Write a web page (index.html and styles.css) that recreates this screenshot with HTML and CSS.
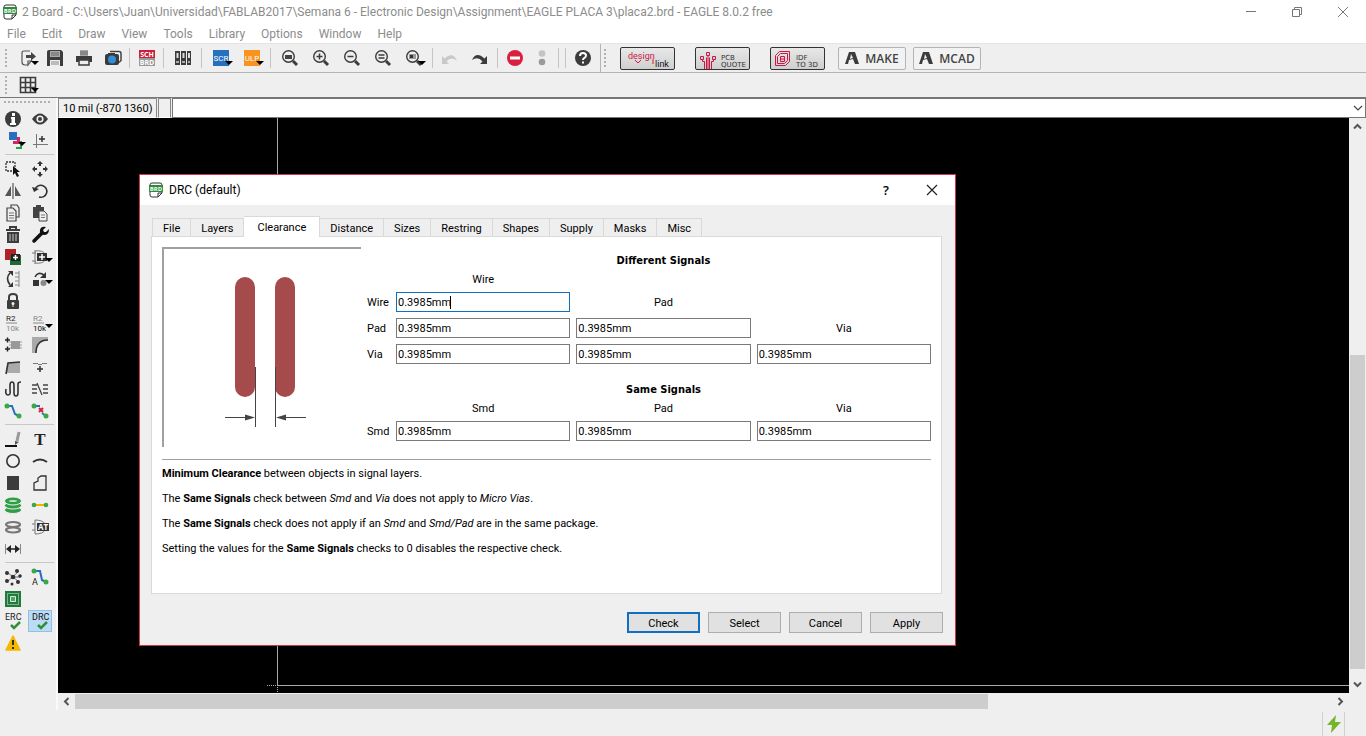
FILE: index.html
```html
<!DOCTYPE html>
<html lang="en">
<head>
    <meta charset="UTF-8">
    <meta name="viewport" content="width=device-width, initial-scale=1.0">
    <title>2 Board - EAGLE 8.0.2 free</title>
    <link rel="stylesheet" href="styles.css">
</head>
<body>
    <header class="titlebar">
        <svg class="app-icon" width="14" height="16" viewBox="0 0 14 16"><path d="M3 1h8q2 0 2 2v8l-4 4H3q-2 0-2-2V3q0-2 2-2z" fill="#fff" stroke="#333"/><path d="M9 15v-4h4" fill="none" stroke="#333"/><path d="M0 3h14v7H0z" fill="#2e8b3d"/><text x="7" y="9" class="icon-text" font-size="6" fill="#fff">BRD</text></svg>
        <h1>2 Board - C:\Users\Juan\Universidad\FABLAB2017\Semana 6 - Electronic Design\Assignment\EAGLE PLACA 3\placa2.brd - EAGLE 8.0.2 free</h1>
        <div class="window-buttons">
            <button aria-label="Minimize"><svg width="12" height="12" viewBox="0 0 12 12"><path d="M1 5.500h10" stroke="#777"/></svg></button>
            <button aria-label="Restore"><svg width="12" height="12" viewBox="0 0 12 12"><path d="M1.500 3.500h7v7h-7zM3.500 3.500v-2h7v7h-2" fill="none" stroke="#777"/></svg></button>
            <button aria-label="Close"><svg width="12" height="12" viewBox="0 0 12 12"><path d="M1 1l10 10M11 1L1 11" stroke="#777"/></svg></button>
        </div>
    </header>
    <nav class="menubar">
        <a href="#">File</a>
        <a href="#">Edit</a>
        <a href="#">Draw</a>
        <a href="#">View</a>
        <a href="#">Tools</a>
        <a href="#">Library</a>
        <a href="#">Options</a>
        <a href="#">Window</a>
        <a href="#">Help</a>
    </nav>

    <div class="toolbar">
        <span class="handle"></span>
        <button class="tool narrow drop" aria-label="Open"><svg width="18" height="18" viewBox="0 0 18 18"><path d="M11 2H5Q3 2 3 4v9q0 3 3 3h3M13 11l-4 5v-4h4" fill="none" stroke="#555" stroke-width="1.200"/><path d="M7 6h5V3l5 4.500-5 4V9H7z" fill="#444"/></svg></button>
        <button class="tool narrow" aria-label="Save"><svg width="18" height="18" viewBox="0 0 18 18"><path d="M1 3q0-2 2-2h12l2 2v14H1z" fill="#3c3c3c"/><path d="M4 2h10v6H4z" fill="#aaa"/><path d="M4 11h10v6H4z" fill="#efefef"/><path d="M5 4h8M5 6h8" stroke="#666"/><path d="M5 13h8M5 15h8" stroke="#888"/></svg></button>
        <button class="tool" aria-label="Print"><svg width="18" height="18" viewBox="0 0 18 18"><path d="M5 1h8v6H5z" fill="#aaa"/><path d="M5 3h8M5 5h8" stroke="#666"/><path d="M1 7h16v6H1z" fill="#3c3c3c"/><path d="M4 11h10v5H4z" fill="#eee" stroke="#3c3c3c" stroke-width="1.500"/></svg></button>
        <button class="tool narrow" aria-label="CAM"><svg width="18" height="18" viewBox="0 0 18 18"><path d="M6 2.500h9q2 0 2 2v7l-2 2" fill="none" stroke="#444" stroke-width="1.500"/><rect x="1" y="5" width="14" height="11" rx="2" fill="#3a3a3a"/><path d="M4 4h7v2H4z" fill="#3a3a3a"/><circle cx="8" cy="10.500" r="4" fill="#2d8fdc"/></svg></button>
        <span class="sep"></span>
        <button class="tool narrow" aria-label="Switch to schematic"><svg width="18" height="18" viewBox="0 0 18 18"><path d="M1 1h16v8H1z" fill="#c9203a"/><path d="M1 9h16v8H1z" fill="#999"/><text x="9" y="8" class="icon-text" font-size="7" fill="#fff">SCH</text><text x="9" y="16" class="icon-text" font-size="7" fill="#fff">BRD</text></svg></button>
        <span class="sep"></span>
        <button class="tool" aria-label="Library manager"><svg width="18" height="18" viewBox="0 0 18 18"><path d="M1 2h5v14H1zM7 2h5v14H7zM13 2h4v14h-4z" fill="#3c3c3c"/><path d="M2.500 4h2v5h-2zM8.500 4h2v5h-2zM14 4h2v5h-2z" fill="#ddd"/><path d="M2 13h3M8 13h3M14 13h2" stroke="#aaa" stroke-width="2"/></svg></button>
        <span class="sep"></span>
        <button class="tool drop" aria-label="Run script"><svg width="18" height="18" viewBox="0 0 18 18"><path d="M1 1h16v16H1z" fill="#2670bd"/><text x="9" y="12" class="icon-text thin" font-size="8" fill="#fff">SCR</text></svg></button>
        <button class="tool drop" aria-label="Run ULP"><svg width="18" height="18" viewBox="0 0 18 18"><path d="M1 1h16v16H1z" fill="#f7931e"/><text x="9" y="12" class="icon-text thin" font-size="8" fill="#fff">ULP</text></svg></button>
        <span class="sep"></span>
        <button class="tool" aria-label="Zoom to fit"><svg width="18" height="18" viewBox="0 0 18 18"><circle cx="7.500" cy="7.500" r="5.800" fill="#eee" stroke="#3c3c3c" stroke-width="1.400"/><path d="M12 12l4 4" stroke="#3c3c3c" stroke-width="3"/><path d="M4 6h7v4H4z" fill="#444"/></svg></button>
        <button class="tool" aria-label="Zoom in"><svg width="18" height="18" viewBox="0 0 18 18"><circle cx="7.500" cy="7.500" r="5.800" fill="#eee" stroke="#3c3c3c" stroke-width="1.400"/><path d="M12 12l4 4" stroke="#3c3c3c" stroke-width="3"/><path d="M4.500 7.500h6M7.500 4.500v6" stroke="#3c3c3c" stroke-width="1.500"/></svg></button>
        <button class="tool" aria-label="Zoom out"><svg width="18" height="18" viewBox="0 0 18 18"><circle cx="7.500" cy="7.500" r="5.800" fill="#eee" stroke="#3c3c3c" stroke-width="1.400"/><path d="M12 12l4 4" stroke="#3c3c3c" stroke-width="3"/><path d="M4.500 7.500h6" stroke="#3c3c3c" stroke-width="1.500"/></svg></button>
        <button class="tool" aria-label="Redraw"><svg width="18" height="18" viewBox="0 0 18 18"><circle cx="7.500" cy="7.500" r="5.800" fill="#eee" stroke="#3c3c3c" stroke-width="1.400"/><path d="M12 12l4 4" stroke="#3c3c3c" stroke-width="3"/><path d="M4.500 6h6M4.500 9h6" stroke="#3c3c3c" stroke-width="1.300"/></svg></button>
        <button class="tool drop" aria-label="Zoom select"><svg width="18" height="18" viewBox="0 0 18 18"><circle cx="7.500" cy="7.500" r="5.800" fill="#eee" stroke="#3c3c3c" stroke-width="1.400"/><path d="M12 12l4 4" stroke="#3c3c3c" stroke-width="3"/><path d="M4 5h7v5H4z" fill="#999"/><path d="M5 6h3v3H5z" fill="#333"/></svg></button>
        <span class="sep"></span>
        <button class="tool narrow" aria-label="Undo"><svg width="18" height="18" viewBox="0 0 18 18"><path d="M1 7v8h7l-2.500-2.500Q10 7 16 12 12 2 3.500 9.500z" fill="#c8c8c8"/></svg></button>
        <button class="tool" aria-label="Redo"><svg width="18" height="18" viewBox="0 0 18 18"><path d="M17 7v8h-7l2.500-2.500Q8 7 2 11 6 2 14.500 9.500z" fill="#3c3c3c"/></svg></button>
        <span class="sep"></span>
        <button class="tool narrow" aria-label="Stop"><svg width="18" height="18" viewBox="0 0 18 18"><circle cx="9" cy="9" r="8" fill="#d9203c"/><path d="M4 9h10" stroke="#fff" stroke-width="3"/></svg></button>
        <button class="tool narrow" aria-label="Go"><svg width="18" height="18" viewBox="0 0 18 18"><circle cx="9" cy="4.500" r="3.300" fill="#c4c4c4"/><circle cx="9" cy="13" r="3.300" fill="#9a9a9a"/></svg></button>
        <span class="sep"></span>
        <span class="sep"></span>
        <button class="tool narrow" aria-label="Help"><svg width="18" height="18" viewBox="0 0 18 18"><circle cx="9" cy="9" r="8" fill="#3c3c3c"/><path d="M6 7q0-3 3-3t3 2.500q0 1.500-1.500 2.300Q9 9.500 9 11" fill="none" stroke="#fff" stroke-width="2"/><path d="M8 12.500h2v2H8z" fill="#fff"/></svg></button>
        <span class="edge"></span>
        <span class="handle"></span>
        <div class="links">
            <button class="link-button" aria-label="design link"><svg width="54" height="22" viewBox="0 0 54 22"><text x="7" y="11" class="icon-text start thin" font-size="9" fill="#cc1744">design</text><path d="M14 12l3 3 3-3M32 11v5" fill="none" stroke="#cc1744"/><text x="34" y="19" class="icon-text start thin" font-size="9" fill="#111">link</text></svg></button>
            <button class="link-button" aria-label="PCB quote"><svg width="54" height="22" viewBox="0 0 54 22"><g fill="none" stroke="#cc1744"><path d="M4.500 8.500h3v3h-3zM10.500 4.500h3v3h-3zM16.500 8.500h3v3h-3z"/><path d="M6.500 11.500v2h2V22M12 7.500V22M17.500 11.500v2h-2V22M10.500 9.500V22M13.500 9.500V22"/></g><text x="25" y="12" class="icon-text start wide" font-size="7" fill="#333">PCB</text><text x="25" y="19" class="icon-text start wide" font-size="7" fill="#333">QUOTE</text></svg></button>
            <button class="link-button" aria-label="IDF to 3D"><svg width="54" height="22" viewBox="0 0 54 22"><g fill="none" stroke="#cc1744"><path d="M4.500 7.500l4-4h10v10l-4 4h-10z"/><path d="M6.500 8.500l3-3h7v7l-3 3h-7z"/><path d="M9.500 8.500h4v5h-4zM9.500 11h4"/></g><text x="25" y="12" class="icon-text start wide" font-size="7" fill="#333">IDF</text><text x="25" y="19" class="icon-text start wide" font-size="7" fill="#333">TO 3D</text></svg></button>
        </div>
        <div class="links plain">
            <button class="brand-button"><svg width="14" height="14" viewBox="0 0 14 14"><path d="M0 13L4 1h6l4 12h-4L8 8l-4 1-1 4z" fill="#3c3c3c"/><path d="M6 3l2 4-3 1z" fill="#f2f2f2"/></svg>MAKE</button>
            <button class="brand-button"><svg width="14" height="14" viewBox="0 0 14 14"><path d="M0 13L4 1h6l4 12h-4L8 8l-4 1-1 4z" fill="#3c3c3c"/><path d="M6 3l2 4-3 1z" fill="#f2f2f2"/></svg>MCAD</button>
        </div>
    </div>
    <div class="toolbar second">
        <span class="handle"></span>
        <button class="tool narrow drop" aria-label="Grid"><svg width="18" height="18" viewBox="0 0 18 18"><path d="M1.500 1.500h15v15h-15zM1.500 6.500h15M1.500 11.500h15M6.500 1.500v15M11.500 1.500v15" fill="none" stroke="#3c3c3c" stroke-width="1.600"/></svg></button>
    </div>

    <div class="workspace">
        <aside class="sidebar">
            <div class="grip"></div>
            <div class="tools">
                <button class="side" aria-label="Info"><svg width="18" height="18" viewBox="0 0 18 18"><circle cx="9" cy="9" r="8" fill="#3c3c3c"/><path d="M8 3h3v3H8zM7 7h4v6h1v2H6v-2h1.500V9H7z" fill="#fff"/></svg></button>
                <button class="side" aria-label="Show"><svg width="18" height="18" viewBox="0 0 18 18"><path d="M1 9q8-11 16 0-8 11-16 0z" fill="#3c3c3c"/><circle cx="9" cy="9" r="3.600" fill="#eee"/><circle cx="9" cy="9" r="2" fill="#3c3c3c"/></svg></button>
                <button class="side drop" aria-label="Layers"><svg width="18" height="18" viewBox="0 0 18 18"><path d="M5 0h8v8H5z" fill="#2670bd"/><path d="M13 5h3v7H9V9h4z" fill="#d6246a"/><path d="M16 9h2v8h-6v-2h4z" fill="#2a9d4a"/></svg></button>
                <button class="side" aria-label="Mark"><svg width="18" height="18" viewBox="0 0 18 18"><path d="M5.500 2v14M2 12.500h15" stroke="#777"/><path d="M8 7h6M11 4v6" stroke="#333" stroke-width="1.500"/></svg></button>
            </div>
            <hr>
            <div class="tools">
                <button class="side" aria-label="Group"><svg width="18" height="18" viewBox="0 0 18 18"><path d="M2 2h9v9H2z" fill="none" stroke="#333" stroke-width="1.300" stroke-dasharray="2 1"/><path d="M9 6v9l2-2 2 4 2-1-2-4h3z" fill="#111"/></svg></button>
                <button class="side" aria-label="Move"><svg width="18" height="18" viewBox="0 0 18 18"><path d="M9 1l3 3H6zM9 17l-3-3h6zM1 9l3-3v6zM17 9l-3 3V6z" fill="#333"/><path d="M9 3v3M9 12v3M3 9h3M12 9h3" stroke="#333" stroke-width="2"/></svg></button>
                <button class="side" aria-label="Mirror"><svg width="18" height="18" viewBox="0 0 18 18"><path d="M7 4v10H1zM11 4v10h6z" fill="#555"/><path d="M9 1v16" stroke="#555" stroke-width="1.200"/></svg></button>
                <button class="side" aria-label="Rotate"><svg width="18" height="18" viewBox="0 0 18 18"><path d="M4 8a6 6 0 1 1 4 7" fill="none" stroke="#333" stroke-width="1.600"/><path d="M1 5l2 5 5-3z" fill="#333"/></svg></button>
                <button class="side" aria-label="Copy"><svg width="18" height="18" viewBox="0 0 18 18"><g fill="#eee" stroke="#444" stroke-width="1.200"><path d="M7 1h6l2 3v9H7z"/><path d="M3 4h6l3 3v10H3z"/></g><path d="M5 9h5M5 11.500h5M5 14h5" stroke="#777"/></svg></button>
                <button class="side" aria-label="Paste"><svg width="18" height="18" viewBox="0 0 18 18"><path d="M2 3h11v11H2z" fill="#444"/><path d="M5 1h5v3H5z" fill="#444"/><path d="M8 7h5l3 3v7H8z" fill="#eee" stroke="#444"/><path d="M10 11h4M10 13.500h4" stroke="#777"/></svg></button>
                <button class="side" aria-label="Delete"><svg width="18" height="18" viewBox="0 0 18 18"><path d="M2 4h14M6 3V1h6v2" fill="none" stroke="#3c3c3c" stroke-width="2"/><path d="M3 6h12v11H3z" fill="#3c3c3c"/><path d="M6 8v7M9 8v7M12 8v7" stroke="#ccc"/></svg></button>
                <button class="side" aria-label="Change"><svg width="18" height="18" viewBox="0 0 18 18"><path d="M3 15l8-8" stroke="#111" stroke-width="3.500" stroke-linecap="round"/><path d="M15 1l-3 3 1 2 2 0 3-3q0 6-5 6-5-1-4-5 1-4 6-3z" fill="#111"/></svg></button>
                <button class="side" aria-label="Add"><svg width="18" height="18" viewBox="0 0 18 18"><path d="M1 1h11v11H1z" fill="#b3202a"/><path d="M6 7h11v10H6z" fill="#1f6b35"/><path d="M7 6h9v7H7z" fill="#222"/><path d="M11.500 7v5M9 9.500h5" stroke="#fff" stroke-width="1.500"/></svg></button>
                <button class="side drop" aria-label="Add part"><svg width="18" height="18" viewBox="0 0 18 18"><path d="M4 2v14M1 5h4M1 13h4M4 3q8-1 10 3M4 15q8 1 10-3" fill="none" stroke="#777"/><path d="M6 5h10v8H6z" fill="#333"/><path d="M11 6v6M8 9h6" stroke="#fff" stroke-width="1.500"/></svg></button>
                <button class="side" aria-label="Pinswap"><svg width="18" height="18" viewBox="0 0 18 18"><path d="M6 3Q1 8 6 15" fill="none" stroke="#333" stroke-width="1.600"/><path d="M4 1h5v5zM4 17h5v-5z" fill="#333"/><path d="M15 1v16M11 3h4M11 7h4M11 11h4M11 15h4" stroke="#888"/></svg></button>
                <button class="side drop" aria-label="Replace"><svg width="18" height="18" viewBox="0 0 18 18"><path d="M4 7q3-6 9-2" fill="none" stroke="#333" stroke-width="1.600"/><path d="M15 2v6H9z" fill="#333"/><path d="M2 10h6v6H2z" fill="#333"/><circle cx="12.500" cy="13" r="3" fill="#888"/></svg></button>
                <button class="side" aria-label="Lock"><svg width="18" height="18" viewBox="0 0 18 18"><path d="M5 9V5q0-3 4-3t4 3v4" fill="none" stroke="#3c3c3c" stroke-width="2"/><rect x="3" y="8" width="12" height="9" rx="1" fill="#3c3c3c"/><circle cx="9" cy="11.500" r="1.500" fill="#eee"/><path d="M9 12v3" stroke="#eee"/></svg></button>
                <span></span>
                <button class="side" aria-label="Name"><svg width="18" height="18" viewBox="0 0 18 18"><text x="2" y="7" class="icon-text start thin" font-size="8" fill="#222">R2</text><path d="M2 9h11" stroke="#888"/><text x="2" y="17" class="icon-text start thin" font-size="8" fill="#888">10k</text></svg></button>
                <button class="side drop" aria-label="Value"><svg width="18" height="18" viewBox="0 0 18 18"><text x="2" y="7" class="icon-text start thin" font-size="8" fill="#888">R2</text><path d="M2 9h11" stroke="#888"/><text x="2" y="17" class="icon-text start thin" font-size="8" fill="#111">10k</text></svg></button>
                <button class="side" aria-label="Smash"><svg width="18" height="18" viewBox="0 0 18 18"><path d="M7 5h9v8H7z" fill="#999"/><path d="M5 6h13M5 9h13M5 12h13" stroke="#999"/><path d="M1 4h5M3.500 1.500v5M1 13h5M3.500 10.500v5" stroke="#222" stroke-width="1.500"/></svg></button>
                <button class="side" aria-label="Miter"><svg width="18" height="18" viewBox="0 0 18 18"><path d="M1 1h16v3Q5 5 5 17H1z" fill="#aaa"/><path d="M5 17Q5 4 17 4" fill="none" stroke="#333" stroke-width="1.600"/></svg></button>
                <button class="side" aria-label="Split"><svg width="18" height="18" viewBox="0 0 18 18"><path d="M4 5l12-1v11H2z" fill="#aaa"/><path d="M2 16L4 5l12-1" fill="none" stroke="#333" stroke-width="1.600"/></svg></button>
                <button class="side" aria-label="Optimize"><svg width="18" height="18" viewBox="0 0 18 18"><path d="M2 5.500h5M11 5.500h5M7 6.500h4" stroke="#777"/><path d="M6 11h6M9 8v6" stroke="#333" stroke-width="1.500"/></svg></button>
                <button class="side" aria-label="Meander"><svg width="18" height="18" viewBox="0 0 18 18"><path d="M2 9q-1 6 2 6t2-5V5q0-3 2-3t2 3v8q0 3 2 3t2-3V4q0-2 3-2" fill="none" stroke="#333" stroke-width="1.600"/></svg></button>
                <button class="side" aria-label="Differential pair"><svg width="18" height="18" viewBox="0 0 18 18"><path d="M1 5h5M1 9h5M1 13h5M12 5h5M12 9h5M12 13h5M6 3l5 12" stroke="#444" stroke-width="1.300"/></svg></button>
                <button class="side" aria-label="Route"><svg width="18" height="18" viewBox="0 0 18 18"><path d="M3 4h5l3 8 4 2" fill="none" stroke="#2670bd" stroke-width="2"/><circle cx="3" cy="4" r="2.500" fill="#3aa845"/><circle cx="15" cy="14" r="2.500" fill="#3aa845"/></svg></button>
                <button class="side" aria-label="Ripup"><svg width="18" height="18" viewBox="0 0 18 18"><path d="M3 4h6M11 11l4 3" stroke="#2670bd" stroke-width="2"/><circle cx="3" cy="4" r="2.500" fill="#3aa845"/><circle cx="15" cy="14" r="2.500" fill="#3aa845"/><path d="M8 6l4 4M12 6l-4 4" stroke="#d9203c" stroke-width="2"/></svg></button>
            </div>
            <hr>
            <div class="tools">
                <button class="side" aria-label="Line"><svg width="18" height="18" viewBox="0 0 18 18"><path d="M1 16h12" stroke="#111" stroke-width="2"/><path d="M15 2l-2 9" stroke="#999" stroke-width="3"/><path d="M11 11l4 1-4 3z" fill="#555"/></svg></button>
                <button class="side" aria-label="Text"><svg width="18" height="18" viewBox="0 0 18 18"><text x="9" y="15" class="serif-text" font-size="17" fill="#222">T</text></svg></button>
                <button class="side" aria-label="Circle"><svg width="18" height="18" viewBox="0 0 18 18"><circle cx="9" cy="9" r="6.200" fill="none" stroke="#333" stroke-width="1.600"/></svg></button>
                <button class="side" aria-label="Arc"><svg width="18" height="18" viewBox="0 0 18 18"><path d="M2 10q7-5 14 0" fill="none" stroke="#333" stroke-width="2"/></svg></button>
                <button class="side" aria-label="Rectangle"><svg width="18" height="18" viewBox="0 0 18 18"><path d="M3 2h12v14H3z" fill="#3c3c3c"/></svg></button>
                <button class="side" aria-label="Polygon"><svg width="18" height="18" viewBox="0 0 18 18"><path d="M3 16V9l4-2V4l3-2h5v14z" fill="none" stroke="#333" stroke-width="1.300"/></svg></button>
                <button class="side" aria-label="Via"><svg width="18" height="18" viewBox="0 0 18 18"><g fill="#2f9e46" stroke="#efefef"><ellipse cx="9" cy="14" rx="8.500" ry="3.500"/><ellipse cx="9" cy="9.500" rx="8.500" ry="3.500"/><ellipse cx="9" cy="5" rx="8.500" ry="4"/></g><ellipse cx="9" cy="5" rx="4" ry="1" fill="#bfe3c5"/></svg></button>
                <button class="side" aria-label="Signal"><svg width="18" height="18" viewBox="0 0 18 18"><path d="M3 9h12" stroke="#f0b400" stroke-width="2"/><circle cx="3" cy="9" r="2.300" fill="#3aa845"/><circle cx="15" cy="9" r="2.300" fill="#3aa845"/></svg></button>
                <button class="side" aria-label="Hole"><svg width="18" height="18" viewBox="0 0 18 18"><g fill="#eee" stroke="#777" stroke-width="2.200"><ellipse cx="9" cy="12" rx="7" ry="2.500"/><ellipse cx="9" cy="6.500" rx="7" ry="2.500"/></g></svg></button>
                <button class="side" aria-label="Attribute"><svg width="18" height="18" viewBox="0 0 18 18"><path d="M4 2v14M1 6h3M1 12h3M4 2q8 0 10 4M4 16q8 0 10-4" fill="none" stroke="#777"/><path d="M6 5h12v8H6z" fill="#333"/><text x="12" y="12" class="icon-text" font-size="8" fill="#fff">AT</text></svg></button>
                <button class="side" aria-label="Dimension"><svg width="18" height="18" viewBox="0 0 18 18"><path d="M1.500 4v10M16.500 4v10" stroke="#888"/><path d="M4 9h10" stroke="#222" stroke-width="1.500"/><path d="M2 9l5-4v8zM16 9l-5-4v8z" fill="#222"/></svg></button>
                <span></span>
            </div>
            <hr>
            <div class="tools">
                <button class="side" aria-label="Ratsnest"><svg width="18" height="18" viewBox="0 0 18 18"><path d="M3 4l12 10M14 4L3 14M9 9h7" stroke="#777"/><g fill="#333"><circle cx="3" cy="5" r="2"/><circle cx="9" cy="9" r="2.300"/><circle cx="14" cy="14" r="2"/><circle cx="13" cy="3" r="2"/><circle cx="3" cy="13" r="2"/><circle cx="16" cy="8" r="1.800"/><circle cx="8" cy="16" r="1.500"/></g></svg></button>
                <button class="side" aria-label="Autorouter"><svg width="18" height="18" viewBox="0 0 18 18"><path d="M3 3h6l2 9 4 2" fill="none" stroke="#2670bd" stroke-width="2"/><circle cx="3" cy="3" r="2.500" fill="#3aa845"/><circle cx="15" cy="14" r="2.500" fill="#3aa845"/><text x="1" y="17" class="icon-text start thin" font-size="9" fill="#222">A</text></svg></button>
                <button class="side" aria-label="Board"><svg width="18" height="18" viewBox="0 0 18 18"><path d="M1 1h16v16H1z" fill="#1f7a3c"/><path d="M3.500 3.500h11v11h-11z" fill="none" stroke="#d9eedd" stroke-dasharray="1 1"/><path d="M6.500 6.500h5v5h-5z" fill="#4ea565" stroke="#d9eedd"/></svg></button>
                <span></span>
                <button class="side" aria-label="ERC"><svg width="18" height="18" viewBox="0 0 18 18"><text x="1" y="8" class="icon-text start thin" font-size="9" fill="#222">ERC</text><path d="M7 13l3 3 6-6" fill="none" stroke="#2f8f3a" stroke-width="2.500"/></svg></button>
                <button class="side active" aria-label="DRC"><svg width="18" height="18" viewBox="0 0 18 18"><text x="1" y="8" class="icon-text start thin" font-size="9" fill="#112">DRC</text><path d="M7 13l3 3 6-6" fill="none" stroke="#2f8f3a" stroke-width="2.500"/></svg></button>
                <button class="side" aria-label="Errors"><svg width="18" height="18" viewBox="0 0 18 18"><path d="M9 2l7 14H2z" fill="#f5b800" stroke="#f5b800" stroke-width="1.500" stroke-linejoin="round"/><path d="M9 6v5M9 13v2" stroke="#222" stroke-width="1.800"/></svg></button>
                <span></span>
            </div>
        </aside>

        <div class="editor">
            <div class="command-row">
                <output class="coords">10 mil (-870 1360)</output>
                <span class="coords-gap"></span>
                <div class="command">
                    <input type="text" aria-label="Command line">
                    <button aria-label="Command history"><svg width="10" height="6" viewBox="0 0 10 6"><path d="M1 1l4 4 4-4" fill="none" stroke="#444" stroke-width="1.200"/></svg></button>
                </div>
            </div>
            <main class="board">
                <svg class="board-lines" width="100%" height="100%">
                    <g stroke="#a8a8a8">
                        <path d="M219.500 0v567"/>
                        <svg y="567" height="1" width="100%" overflow="visible"><line x1="219" y1=".5" x2="100%" y2=".5"/></svg>
                        <path d="M209 567.500h22M219.500 557v18" stroke-dasharray="1 1"/>
                    </g>
                </svg>
            </main>
            <div class="scrollbar vertical">
                <button aria-label="Scroll up"><svg width="9" height="7" viewBox="0 0 9 7"><path d="M1 5.500L4.500 2 8 5.500" fill="none" stroke="#555" stroke-width="2"/></svg></button>
                <span class="before"></span>
                <span class="thumb"></span>
                <span class="after"></span>
                <button aria-label="Scroll down"><svg width="9" height="7" viewBox="0 0 9 7"><path d="M1 1.500L4.500 5 8 1.500" fill="none" stroke="#555" stroke-width="2"/></svg></button>
            </div>
            <div class="scrollbar horizontal">
                <button aria-label="Scroll left"><svg width="7" height="9" viewBox="0 0 7 9"><path d="M5.500 1L2 4.500 5.500 8" fill="none" stroke="#555" stroke-width="2"/></svg></button>
                <span class="thumb"></span>
                <span class="after"></span>
                <button aria-label="Scroll right"><svg width="7" height="9" viewBox="0 0 7 9"><path d="M1.500 1L5 4.500 1.500 8" fill="none" stroke="#555" stroke-width="2"/></svg></button>
            </div>
        </div>
    </div>

    <footer class="statusbar">
        <span class="status-cell"><svg width="14" height="18" viewBox="0 0 14 18"><path d="M9 0L0 10h5l-1 8L14 7H8z" fill="#74b52c"/></svg></span>
    </footer>

    <section class="dialog" role="dialog" aria-labelledby="dialog-title">
        <div class="dialog-title">
            <svg class="app-icon" width="14" height="16" viewBox="0 0 14 16"><path d="M3 1h8q2 0 2 2v8l-4 4H3q-2 0-2-2V3q0-2 2-2z" fill="#fff" stroke="#333"/><path d="M9 15v-4h4" fill="none" stroke="#333"/><path d="M0 3h14v7H0z" fill="#2e8b3d"/><text x="7" y="9" class="icon-text" font-size="6" fill="#fff">BRD</text></svg>
            <h2 id="dialog-title">DRC (default)</h2>
            <button class="help">?</button>
            <button aria-label="Close dialog"><svg width="12" height="12" viewBox="0 0 12 12"><path d="M1 1l10 10M11 1L1 11" stroke="#222" stroke-width="1.200"/></svg></button>
        </div>
        <div class="dialog-body">
            <div class="tabs" role="tablist">
                <button role="tab">File</button>
                <button role="tab">Layers</button>
                <button role="tab" class="current" aria-selected="true">Clearance</button>
                <button role="tab">Distance</button>
                <button role="tab">Sizes</button>
                <button role="tab">Restring</button>
                <button role="tab">Shapes</button>
                <button role="tab">Supply</button>
                <button role="tab">Masks</button>
                <button role="tab">Misc</button>
            </div>
            <div class="panel">
                <div class="clearance">
                    <div class="diagram">
                        <svg width="100" height="154" viewBox="0 0 100 154">
                            <rect x="10" y="0" width="20" height="120" rx="10" fill="#a54b4b"/>
                            <rect x="50" y="0" width="20" height="120" rx="10" fill="#a54b4b"/>
                            <path d="M30.500 90v60M50.500 90v60M0 140.500h24M57 140.500h24" stroke="#444"/>
                            <path d="M20 137.500l10 3-10 3zM61 137.500l-10 3 10 3z" fill="#444"/>
                        </svg>
                    </div>
                    <div class="signals">
                        <h3>Different Signals</h3>
                        <span class="column first">Wire</span>
                        <label class="row" for="wire-wire">Wire</label>
                        <div class="field">
                            <input id="wire-wire" class="focused" type="text" value="0.3985mm">
                            <span class="cursor"></span>
                        </div>
                        <span class="column">Pad</span>
                        <label class="row" for="pad-wire">Pad</label>
                        <input id="pad-wire" type="text" value="0.3985mm">
                        <input type="text" value="0.3985mm" aria-label="Pad to pad">
                        <span class="column">Via</span>
                        <label class="row" for="via-wire">Via</label>
                        <input id="via-wire" type="text" value="0.3985mm">
                        <input type="text" value="0.3985mm" aria-label="Via to pad">
                        <input type="text" value="0.3985mm" aria-label="Via to via">
                        <h3 class="same">Same Signals</h3>
                        <span class="column first">Smd</span>
                        <span class="column">Pad</span>
                        <span class="column">Via</span>
                        <label class="row" for="smd-smd">Smd</label>
                        <input id="smd-smd" type="text" value="0.3985mm">
                        <input type="text" value="0.3985mm" aria-label="Smd to pad">
                        <input type="text" value="0.3985mm" aria-label="Smd to via">
                    </div>
                </div>
                <div class="notes">
                    <p><b>Minimum Clearance</b> between objects in signal layers.</p>
                    <p>The <b>Same Signals</b> check between <i>Smd</i> and <i>Via</i> does not apply to <i>Micro Vias</i>.</p>
                    <p>The <b>Same Signals</b> check does not apply if an <i>Smd</i> and <i>Smd/Pad</i> are in the same package.</p>
                    <p>Setting the values for the <b>Same Signals</b> checks to 0 disables the respective check.</p>
                </div>
            </div>
            <div class="actions">
                <button class="default">Check</button>
                <button>Select</button>
                <button>Cancel</button>
                <button>Apply</button>
            </div>
        </div>
    </section>
</body>
</html>
```
FILE: styles.css
```css
* {
    box-sizing: border-box;
}
body {
    margin: 0;
    height: 100vh;
    display: flex;
    flex-direction: column;
    font-family: Roboto, sans-serif;
    font-size: 11px;
    color: #000;
    background-color: #efefef;
    overflow: hidden;
}
h1, h2, h3, p {
    margin: 0;
    font-size: 11px;
}
button, input {
    font: inherit;
    color: inherit;
    padding: 0;
    border: none;
    background: none;
    border-radius: 0;
    outline: none;
}
svg {
    display: block;
    flex: none;
}
.icon-text {
    font-family: "Open Sans", sans-serif;
    font-weight: bold;
    text-anchor: middle;
}
.icon-text.thin {
    font-family: Roboto, sans-serif;
    font-weight: normal;
}
.icon-text.start {
    text-anchor: start;
}
.icon-text.wide {
    font-family: "DejaVu Sans", sans-serif;
    font-weight: normal;
}
.serif-text {
    font-family: "Liberation Serif", serif;
    font-weight: bold;
    text-anchor: middle;
}

/* title and menu */
.titlebar {
    display: flex;
    align-items: center;
    height: 23px;
    padding-left: 3px;
    background-color: #fff;
}
.titlebar h1 {
    flex: 1;
    margin-left: 5px;
    font-size: 12px;
    font-weight: normal;
    line-height: 16px;
    color: #8c8c8c;
    white-space: nowrap;
}
.window-buttons {
    display: flex;
}
.window-buttons button {
    width: 46px;
    height: 20px;
    display: flex;
    align-items: center;
    justify-content: center;
}
.menubar {
    display: flex;
    gap: 16px;
    height: 21px;
    padding: 2px 7px 0;
    background-color: #fff;
    border-bottom: 1px solid #e4e4e4;
    font-size: 12px;
    line-height: 18px;
}
.menubar a {
    color: #8c8c8c;
    text-decoration: none;
}

/* toolbars */
.toolbar {
    display: flex;
    align-items: center;
    height: 29px;
    padding-left: 4px;
    border-bottom: 1px solid #b4b4b4;
}
.toolbar.second {
    height: 25px;
    border-bottom-color: #777;
}
.handle {
    width: 4px;
    height: 20px;
    margin-right: 6px;
    background: radial-gradient(circle, #b0b0b0 1px, transparent 1px) 0 0 / 4px 4px;
}
.tool {
    position: relative;
    width: 31px;
    height: 24px;
    display: flex;
    align-items: center;
    justify-content: center;
}
.tool.narrow {
    width: 27px;
}
.drop::after {
    content: "";
    position: absolute;
    right: 3px;
    bottom: 5px;
    border: 4px solid transparent;
    border-top-color: #000;
    border-bottom: none;
}
.tool.narrow.drop::after {
    right: 2px;
}
.sep {
    width: 1px;
    height: 20px;
    margin: 0 3px;
    background-color: #c4c4c4;
}
.edge {
    width: 1px;
    height: 28px;
    margin: 0 2px 0 4px;
    background-color: #b4b4b4;
}
.links {
    display: flex;
    gap: 20px;
    margin-left: 7px;
}
.links.plain {
    gap: 7px;
    margin-left: 13px;
}
.link-button {
    width: 55px;
    height: 23px;
    border: 1px solid #333;
    border-radius: 2px;
    background: linear-gradient(#e8e8e8, #cfcfcf);
    overflow: hidden;
}
.brand-button {
    width: 68px;
    height: 23px;
    display: flex;
    align-items: center;
    justify-content: center;
    gap: 6px;
    border: 1px solid #b4b4b4;
    border-radius: 2px;
    background-color: #f2f2f2;
    font-family: "Open Sans", sans-serif;
    font-size: 12px;
    font-weight: 600;
    color: #444;
}

/* left tools */
.workspace {
    flex: 1;
    min-height: 0;
    display: flex;
}
.sidebar {
    width: 58px;
    padding: 0 2px 0 0;
    border-right: 2px solid #fafafa;
}
.grip {
    height: 6px;
    margin: 2px 3px;
    background: radial-gradient(circle, #b0b0b0 1px, transparent 1px) 0 0 / 4px 4px repeat-x;
}
.tools {
    display: grid;
    grid-template-columns: 26px 26px;
    grid-auto-rows: 22px;
    column-gap: 1px;
}
.sidebar hr {
    margin: 2px 0 3px 5px;
    border: none;
    border-top: 1px solid #c8c8c8;
}
.side {
    position: relative;
    display: flex;
    align-items: center;
    justify-content: center;
}
.side.drop::after {
    right: 0;
    bottom: 6px;
}
.side.active {
    margin: 0 1px;
    background-color: #bcdcf4;
    border: 1px solid #8fc0e8;
}

/* editor */
.editor {
    flex: 1;
    min-width: 0;
    display: grid;
    grid-template-columns: 1fr 17px;
    grid-template-rows: 20px 1fr 17px;
}
.command-row {
    grid-column: 1 / 3;
    display: flex;
    gap: 1px;
}
.coords {
    width: 99px;
    padding-left: 4px;
    border: 1px solid #888;
    border-bottom-color: #fff;
    line-height: 20px;
    white-space: nowrap;
}
.coords-gap {
    width: 13px;
    border: 1px solid #888;
    border-bottom-color: #fff;
}
.command {
    flex: 1;
    display: flex;
    border: 1px solid #777;
    background-color: #fff;
}
.command input {
    flex: 1;
    min-width: 0;
    padding: 0 4px;
}
.command button {
    width: 15px;
    display: flex;
    align-items: center;
    justify-content: center;
}
.board {
    overflow: hidden;
    background-color: #000;
}
.scrollbar {
    display: flex;
    background-color: #efefef;
}
.scrollbar.vertical {
    flex-direction: column;
}
.scrollbar button {
    width: 17px;
    height: 17px;
    display: flex;
    align-items: center;
    justify-content: center;
}
.scrollbar .thumb {
    background-color: #cdcdcd;
}
.vertical .before {
    flex: 220;
}
.vertical .thumb {
    flex: 314;
    margin: 0 1px;
}
.vertical .after {
    flex: 7;
}
.horizontal .thumb {
    flex: 913;
    margin: 1px 0;
}
.horizontal .after {
    flex: 344;
}
.statusbar {
    display: flex;
    justify-content: flex-end;
    height: 26px;
    padding: 2px 21px 0 0;
}
.status-cell {
    width: 23px;
    display: flex;
    align-items: center;
    justify-content: center;
    border: 1px solid #d0d0d0;
    border-width: 0 1px;
}

/* dialog window */
.dialog {
    position: absolute;
    left: 139px;
    top: 174px;
    width: 817px;
    border: 1px solid #c8374a;
    background-color: #efefef;
}
.dialog-title {
    display: flex;
    align-items: center;
    height: 30px;
    padding-left: 9px;
    background-color: #fff;
}
.dialog-title h2 {
    flex: 1;
    margin-left: 6px;
    font-size: 12px;
    font-weight: normal;
    line-height: 16px;
}
.dialog-title button {
    width: 46px;
    height: 28px;
    display: flex;
    align-items: center;
    justify-content: center;
}
.dialog-title .help {
    font-family: "Open Sans", sans-serif;
    font-size: 13px;
    font-weight: 600;
}
.dialog-body {
    padding: 11px 13px 12px 11px;
}
.tabs {
    display: flex;
    align-items: flex-end;
    padding-left: 1px;
}
.tabs button {
    height: 18px;
    padding: 1px 10px 0;
    border: 1px solid #d9d9d9;
    border-width: 1px 1px 0 0;
}
.tabs button:first-child {
    border-left-width: 1px;
}
.tabs .current {
    height: 21px;
    margin-bottom: -1px;
    padding: 0 13px;
    background-color: #fff;
}
.panel {
    min-height: 358px;
    padding: 10px;
    background-color: #fff;
    border: 1px solid #d9d9d9;
}
.clearance {
    display: flex;
    gap: 6px;
    padding-bottom: 12px;
    border-bottom: 1px solid #a0a0a0;
}
.diagram {
    width: 199px;
    height: 200px;
    padding: 28px 0 0 61px;
    border: 2px solid #a0a0a0;
    border-width: 2px 0 0 2px;
}
.signals {
    flex: 1;
    display: grid;
    grid-template-columns: 23px 1fr 1fr 1fr;
    align-content: start;
    align-items: center;
    gap: 6px;
    padding-top: 7px;
    line-height: 13px;
}
.signals h3 {
    grid-column: 2 / 5;
    font-family: "DejaVu Sans Condensed", "DejaVu Sans", sans-serif;
    text-align: center;
}
.signals .same {
    margin-top: 13px;
}
.signals .column {
    text-align: center;
}
.signals .first {
    grid-column: 2;
}
.signals .row {
    grid-column: 1;
}
.signals input {
    display: block;
    width: 100%;
    height: 20px;
    padding: 1px 1px 0;
    border: 1px solid #7a7a7a;
    background-color: #fff;
}
.signals .focused {
    border-color: #0f6fc0;
}
.field {
    position: relative;
}
.cursor {
    position: absolute;
    left: 54px;
    top: 4px;
    width: 1px;
    height: 13px;
    background-color: #000;
}
.notes {
    padding-top: 7px;
    line-height: 13px;
}
.notes p {
    margin-bottom: 12px;
}
.actions {
    display: flex;
    justify-content: flex-end;
    gap: 8px;
    margin: 18px -1px 0 0;
}
.actions button {
    width: 73px;
    height: 21px;
    padding-top: 1px;
    border: 1px solid #adadad;
    background-color: #e1e1e1;
}
.actions .default {
    border: 2px solid #0f6fc0;
}
```
